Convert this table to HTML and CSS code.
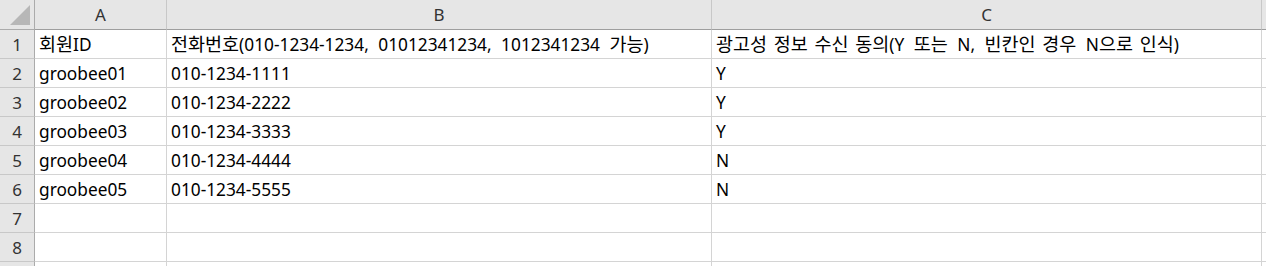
FILE: index.html
```html
<!DOCTYPE html>
<html lang="ko">
<head>
<meta charset="utf-8">
<link rel="stylesheet" href="styles.css">
</head>
<body>
<div class="sheet">
  <div class="corner"><span class="tri"></span></div>
  <div class="colh">A</div>
  <div class="colh">B</div>
  <div class="colh">C</div>
  <div class="colh extra"></div>

  <div class="rowh">1</div>
  <div class="cell"><span class="ko">회원</span>ID</div>
  <div class="cell title"><span class="ko">전화번호</span>(010-1234-1234, 01012341234, 1012341234 <span class="ko">가능</span>)</div>
  <div class="cell title"><span class="ko">광고성 정보 수신 동의</span>(Y <span class="ko">또는</span> N, <span class="ko">빈칸인 경우</span> N<span class="ko">으로 인식</span>)</div>
  <div class="cell extra"></div>

  <div class="rowh">2</div>
  <div class="cell">groobee01</div>
  <div class="cell">010-1234-1111</div>
  <div class="cell">Y</div>
  <div class="cell extra"></div>

  <div class="rowh">3</div>
  <div class="cell">groobee02</div>
  <div class="cell">010-1234-2222</div>
  <div class="cell">Y</div>
  <div class="cell extra"></div>

  <div class="rowh">4</div>
  <div class="cell">groobee03</div>
  <div class="cell">010-1234-3333</div>
  <div class="cell">Y</div>
  <div class="cell extra"></div>

  <div class="rowh">5</div>
  <div class="cell">groobee04</div>
  <div class="cell">010-1234-4444</div>
  <div class="cell">N</div>
  <div class="cell extra"></div>

  <div class="rowh">6</div>
  <div class="cell">groobee05</div>
  <div class="cell">010-1234-5555</div>
  <div class="cell">N</div>
  <div class="cell extra"></div>

  <div class="rowh">7</div>
  <div class="cell"></div>
  <div class="cell"></div>
  <div class="cell"></div>
  <div class="cell extra"></div>

  <div class="rowh">8</div>
  <div class="cell"></div>
  <div class="cell"></div>
  <div class="cell"></div>
  <div class="cell extra"></div>

  <div class="rowh"></div>
  <div class="cell"></div>
  <div class="cell"></div>
  <div class="cell"></div>
  <div class="cell extra"></div>
</div>
</body>
</html>
```
FILE: styles.css
```css
html, body {
  margin: 0;
  padding: 0;
  background: #ffffff;
}
.sheet {
  display: grid;
  grid-template-columns: 35px 132px 545px 550px 1fr;
  grid-template-rows: 30px repeat(9, 29px);
  font-family: "Noto Sans", "Noto Sans CJK KR", sans-serif;
  font-size: 17.3px;
  color: #000;
  overflow: hidden;
  height: 266px;
}
.ko {
  font-family: "Noto Sans CJK KR", sans-serif;
  font-size: 18.5px;
  line-height: 1;
  word-spacing: 1.5px;
}
.title {
  word-spacing: 5px;
}
.corner {
  background: #e6e6e6;
  border-right: 1px solid #ababab;
  border-bottom: 1px solid #ababab;
  position: relative;
}
.tri {
  position: absolute;
  right: 4px;
  bottom: 4px;
  width: 0;
  height: 0;
  border-left: 20px solid transparent;
  border-bottom: 20px solid #b7b7b7;
}
.colh {
  background: #e6e6e6;
  border-right: 1px solid #c8c8c8;
  border-bottom: 1px solid #9e9e9e;
  display: flex;
  align-items: flex-end;
  justify-content: center;
  padding-bottom: 3px;
  color: #333;
  font-size: 17px;
}
.colh.extra {
  border-right: none;
}
.rowh {
  background: #e6e6e6;
  border-right: 1px solid #ababab;
  border-bottom: 1px solid #c8c8c8;
  display: flex;
  align-items: flex-end;
  justify-content: center;
  padding-bottom: 2px;
  color: #333;
  font-size: 17px;
}
.cell {
  border-right: 1px solid #d4d4d4;
  border-bottom: 1px solid #d4d4d4;
  display: flex;
  align-items: baseline;
  align-content: flex-end;
  flex-wrap: wrap;
  padding: 0 0 2px 4px;
  white-space: pre;
  overflow: hidden;
}
.cell.extra {
  border-right: none;
}
```
